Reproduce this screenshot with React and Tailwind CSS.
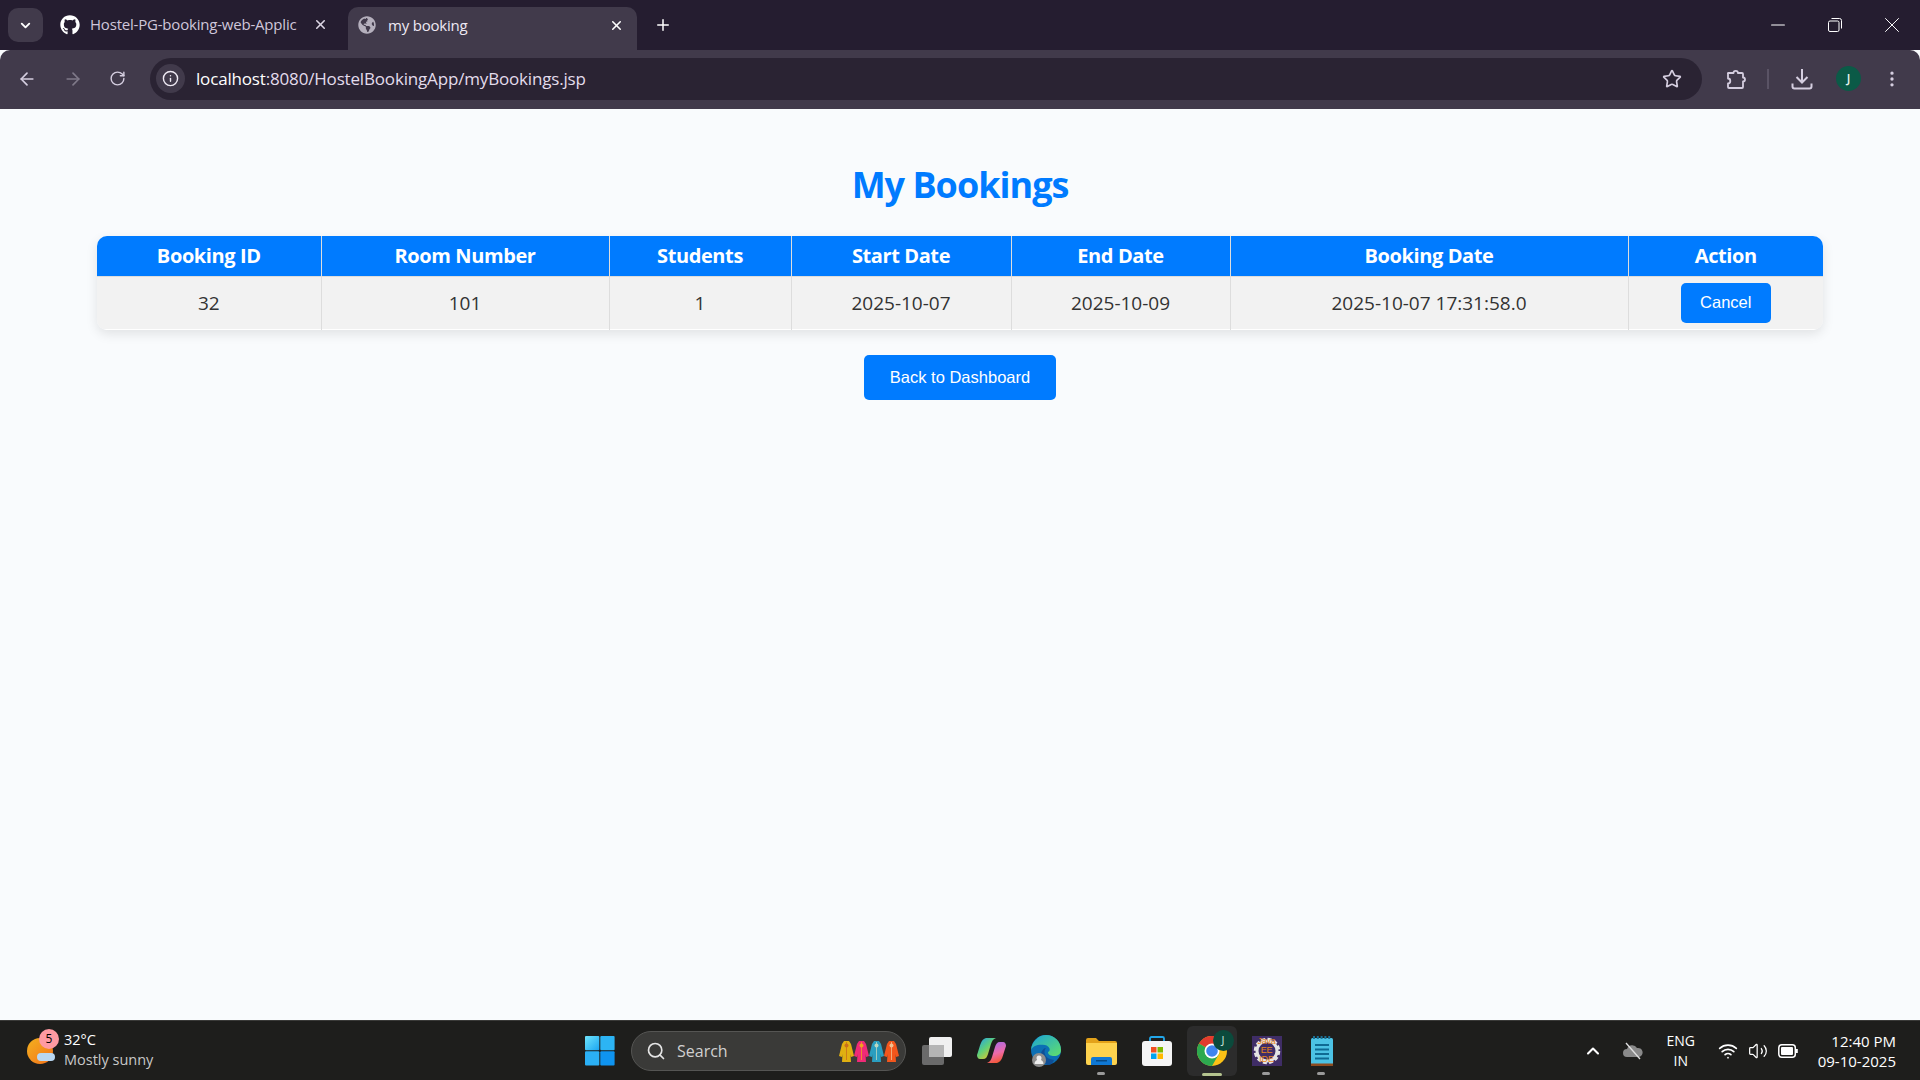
import {
  ArrowLeft,
  ArrowRight,
  ChevronDown,
  ChevronUp,
  EllipsisVertical,
  Info,
  Minus,
  Plus,
  RotateCw,
  Search,
  Star,
  Volume2,
  Wifi,
  X,
} from 'lucide-react'
import { FaGithub, FaGlobeAmericas } from 'react-icons/fa'

const columns = [
  { label: 'Booking ID', value: '32', width: 'w-[224px]' },
  { label: 'Room Number', value: '101', width: 'w-[288px]' },
  { label: 'Students', value: '1', width: 'w-[182px]' },
  { label: 'Start Date', value: '2025-10-07', width: 'w-[220px]' },
  { label: 'End Date', value: '2025-10-09', width: 'w-[219px]' },
  { label: 'Booking Date', value: '2025-10-07 17:31:58.0', width: 'w-[398px]' },
]

const segoe = "font-['Open_Sans',sans-serif]"

function WindowControls() {
  return (
    <div className="ml-auto flex items-center text-white">
      <div className="flex w-[57px] justify-center">
        <Minus size={22} strokeWidth={1.1} />
      </div>
      <div className="flex w-[57px] justify-center">
        <svg width="14" height="14" viewBox="0 0 14 14" fill="none" stroke="white" strokeWidth="1">
          <rect x="0.5" y="3" width="10.5" height="10.5" rx="1.5" />
          <path d="M3.5 .5h8a2 2 0 0 1 2 2v8" />
        </svg>
      </div>
      <div className="flex w-[57px] justify-center">
        <X size={26} strokeWidth={0.9} />
      </div>
    </div>
  )
}

function TabStrip() {
  return (
    <div className={`flex h-[50px] shrink-0 bg-[#251d30] ${segoe}`}>
      <div className="ml-2 mt-2 flex h-[34px] w-[35px] items-center justify-center rounded-[10px] bg-[#413a4b] text-white">
        <ChevronDown size={15} strokeWidth={3} />
      </div>
      <div className="ml-[17px] flex h-[50px] w-[288px] items-center pb-[1px]">
        <FaGithub size={20} className="text-white" />
        <span className="ml-[10px] w-[208px] overflow-hidden whitespace-nowrap text-[15px] tracking-[-0.2px] text-[#cfc6da]">
          Hostel-PG-booking-web-Applic
        </span>
        <X size={15} strokeWidth={2.5} className="ml-[15px] text-[#dcd6e4]" />
      </div>
      <div className="mt-[7px] flex h-[43px] w-[289px] items-center rounded-t-[10px] bg-[#413a4b] pb-[7px] pl-[10px]">
        <FaGlobeAmericas size={18} className="text-[#b5b0bd]" />
        <span className="ml-3 w-[221px] text-[15px] tracking-[-0.2px] text-[#eee9f3]">my booking</span>
        <X size={15} strokeWidth={2.5} className="text-white" />
      </div>
      <div className="ml-[17px] flex h-[50px] items-center">
        <Plus size={18} strokeWidth={2} className="text-white" />
      </div>
      <WindowControls />
    </div>
  )
}

function PuzzleIcon() {
  return (
    <svg width="22" height="22" viewBox="0 0 22 22" fill="none" stroke="#d5cee0" strokeWidth="1.8" strokeLinejoin="round">
      <path d="M3 5h5.500a2.200 2.200 0 0 1 4.400 0H17a1 1 0 0 1 1 1v3.500a2 2 0 0 1 0 4V19a1 1 0 0 1-1 1H4a1 1 0 0 1-1-1v-3.500c1.500 0 2.300-1 2.300-2.500S4.500 10.500 3 10.500V6a1 1 0 0 1 0-1z" />
    </svg>
  )
}

function DownloadIcon() {
  return (
    <svg width="22" height="22" viewBox="0 0 22 22" fill="none" stroke="#d5cee0" strokeWidth="2">
      <path d="M11 1v13M5.500 9l5.500 5.500L16.500 9" />
      <path d="M1.500 15.500v3a2 2 0 0 0 2 2h15a2 2 0 0 0 2-2v-3" />
    </svg>
  )
}

function Toolbar() {
  return (
    <div className="flex h-[59px] shrink-0 items-center rounded-t-[10px] bg-[#413a4b] pb-[2px] text-[#d5cee0]">
      <div className="flex w-[50px] justify-center pl-[4px]">
        <ArrowLeft size={20} />
      </div>
      <div className="flex w-[45px] justify-center">
        <ArrowRight size={20} className="text-[#7f7989]" />
      </div>
      <div className="flex w-[45px] justify-center">
        <RotateCw size={17} />
      </div>
      <div className="ml-[10px] flex h-[42px] w-[1552px] items-center rounded-full bg-[#2a2333]">
        <div className="ml-[6px] flex h-[29px] w-[29px] items-center justify-center rounded-full bg-[#413a4b]">
          <Info size={17} className="text-[#efeaf4]" />
        </div>
        <span className={`ml-[11px] text-[17px] tracking-[-0.17px] text-[#e3dcec] ${segoe}`}>
          <span className="text-white">localhost</span>:8080/HostelBookingApp/myBookings.jsp
        </span>
        <Star size={20} strokeWidth={2} className="ml-auto mr-5 text-[#d5cee0]" />
      </div>
      <div className="ml-[23px] flex w-[22px] justify-center">
        <PuzzleIcon />
      </div>
      <div className="ml-[20px] h-5 w-[2px] bg-[#5a5365]" />
      <div className="ml-[22px] flex w-[22px] justify-center">
        <DownloadIcon />
      </div>
      <div className={`ml-[23px] flex h-[25px] w-[25px] items-center justify-center rounded-full bg-[#0b5a47] text-[12px] font-semibold text-[#e6f3ee] ${segoe}`}>
        J
      </div>
      <div className="ml-[21px] flex w-[20px] justify-center">
        <EllipsisVertical size={20} />
      </div>
    </div>
  )
}

function BookingsTable() {
  return (
    <div className="ml-[97px] w-[1726px] overflow-hidden rounded-[10px] shadow-[0_4px_12px_rgba(0,0,0,0.1)]">
      <table className={`w-full table-fixed border-collapse ${segoe}`}>
        <thead>
          <tr className="h-[40px] bg-[#007bff] text-white">
            {columns.map((col) => (
              <th key={col.label} className={`${col.width} border-r border-[#dddddd] pt-[1px] text-[20px] font-bold tracking-[-0.4px]`}>
                {col.label}
              </th>
            ))}
            <th className="pt-[1px] text-[20px] font-bold tracking-[-0.4px]">Action</th>
          </tr>
        </thead>
        <tbody>
          <tr className="h-[53px] border-t border-b border-t-[#dddddd] border-b-white bg-[#f2f2f2] text-[#333333]">
            {columns.map((col) => (
              <td key={col.label} className="border-r border-[#dddddd] pt-[2px] text-center text-[19px]">
                {col.value}
              </td>
            ))}
            <td className="text-center">
              <button className="h-[40px] w-[90px] rounded-[5px] bg-[#007bff] font-['Liberation_Sans',sans-serif] text-[16.5px] text-white">
                Cancel
              </button>
            </td>
          </tr>
        </tbody>
      </table>
    </div>
  )
}

function WindowsLogo() {
  return (
    <svg width="30" height="30" viewBox="0 0 30 30">
      <defs>
        <linearGradient id="winA" x1="0" y1="0" x2="1" y2="1">
          <stop offset="0" stopColor="#6fe4fb" />
          <stop offset="1" stopColor="#1aa5f2" />
        </linearGradient>
      </defs>
      <rect x="0" y="0" width="14.3" height="14.3" rx="1" fill="url(#winA)" />
      <rect x="15.3" y="0" width="14.3" height="14.3" rx="1" fill="#2cb4f4" />
      <rect x="0" y="15.3" width="14.3" height="14.3" rx="1" fill="#2bb0f5" />
      <rect x="15.3" y="15.3" width="14.3" height="14.3" rx="1" fill="#0f94f0" />
    </svg>
  )
}

function Robe({ color, trim }) {
  return (
    <svg width="15" height="22" viewBox="0 0 15 22">
      <path d="M5 1h5l2 3 3 12-3 1-.5-3 .5 8H3l.5-8-.5 3-3-1L3 4z" fill={color} />
      <path d="M7.5 2v18" stroke={trim} strokeWidth="0.8" />
      <circle cx="7.5" cy="5.5" r="2" fill={trim} />
    </svg>
  )
}

function TaskViewIcon() {
  return (
    <svg width="30" height="28" viewBox="0 0 30 28">
      <rect x="0" y="8" width="22" height="20" rx="2" fill="#6a6a6a" />
      <rect x="7" y="0" width="23" height="20" rx="2" fill="#f0f0f0" />
      <rect x="7" y="8" width="15" height="12" fill="#b5b5b5" />
    </svg>
  )
}

function CopilotIcon() {
  return (
    <svg width="29" height="25" viewBox="0 0 29 25">
      <defs>
        <linearGradient id="copL" x1="0" y1="0" x2="0.8" y2="1">
          <stop offset="0" stopColor="#1e9ff2" />
          <stop offset="0.5" stopColor="#5fd07a" />
          <stop offset="1" stopColor="#f7c51e" />
        </linearGradient>
        <linearGradient id="copR" x1="0.3" y1="0" x2="0.6" y2="1">
          <stop offset="0" stopColor="#a86be8" />
          <stop offset="0.55" stopColor="#ee6aa8" />
          <stop offset="1" stopColor="#f4562e" />
        </linearGradient>
      </defs>
      <path d="M9 0h10c-3 1-4 3-5 6l-3 10c-1 3-2 5-5 5H3c-2 0-3-2-3-4l1-3C3 8 4 1 9 0z" fill="url(#copL)" />
      <path d="M20 25H10c3-1 4-3 5-6l3-10c1-3 2-5 5-5h3c2 0 3 2 3 4l-1 3c-2 6-3 13-8 14z" fill="url(#copR)" />
    </svg>
  )
}

function EdgeIcon() {
  return (
    <svg width="32" height="32" viewBox="0 0 32 32">
      <defs>
        <linearGradient id="edgeTop" x1="0" y1="0" x2="1" y2="1">
          <stop offset="0" stopColor="#1aa3d8" />
          <stop offset="1" stopColor="#62e06a" />
        </linearGradient>
      </defs>
      <circle cx="15" cy="15" r="15" fill="#0c6fb4" />
      <path d="M0 15C1 6 8 0 15 0c9 0 15 7 15 15 0 4-3 6-7 6-3 0-6-1-6-4 3-1 2-6-3-7C8 9 2 10 0 15z" fill="url(#edgeTop)" />
      <path d="M17 30c-5-1-9-6-7-12 1-3 3-5 5-5-3 3-2 11 8 12-1 3-3 5-6 5z" fill="#0f4f96" />
      <circle cx="8" cy="25" r="7" fill="#8d8d8d" />
      <circle cx="8" cy="23" r="2.5" fill="#eeeeee" />
      <path d="M3.5 29c0-6 9-6 9 0z" fill="#eeeeee" />
    </svg>
  )
}

function FolderIcon() {
  return (
    <svg width="31" height="28" viewBox="0 0 31 28">
      <path d="M0 3a2 2 0 0 1 2-2h8l3 3h16a2 2 0 0 1 2 2v6H0z" fill="#e3a21a" />
      <path d="M0 6h31v20a2 2 0 0 1-2 2H2a2 2 0 0 1-2-2z" fill="#fdd24e" />
      <path d="M5 28v-6a2 2 0 0 1 2-2h17a2 2 0 0 1 2 2v6z" fill="#0f78d4" />
      <rect x="10" y="23" width="11" height="1.5" fill="#064a87" />
    </svg>
  )
}

function StoreIcon() {
  return (
    <svg width="30" height="30" viewBox="0 0 30 30">
      <path d="M8 6V2.500A1.500 1.500 0 0 1 9.500 1h11A1.500 1.500 0 0 1 22 2.500V6" fill="none" stroke="#22a7ea" strokeWidth="1.8" />
      <rect x="0" y="5" width="30" height="25" rx="3" fill="#f5f5f5" />
      <rect x="9" y="11" width="5.500" height="5.500" fill="#f25022" />
      <rect x="15.500" y="11" width="5.500" height="5.500" fill="#7fba00" />
      <rect x="9" y="17.500" width="5.500" height="5.500" fill="#00a4ef" />
      <rect x="15.500" y="17.500" width="5.500" height="5.500" fill="#ffb900" />
    </svg>
  )
}

function ChromeIcon() {
  return (
    <div className="relative flex h-[50px] w-[50px] items-center justify-center rounded-[6px] bg-[#2c2c2c]">
      <svg width="30" height="30" viewBox="0 0 30 30">
        <circle cx="15" cy="15" r="15" fill="#fbc116" />
        <path d="M15 15 2 7.500A15 15 0 0 1 28 7.500z" fill="#e33b2e" />
        <path d="M2 7.500A15 15 0 0 0 15 30l7.500-13-7.500-2z" fill="#2da94f" />
        <circle cx="15" cy="15" r="7.500" fill="#ffffff" />
        <circle cx="15" cy="15" r="5.800" fill="#3f85ee" />
      </svg>
      <div className={`absolute right-[3px] top-[4px] flex h-[21px] w-[21px] items-center justify-center rounded-full bg-[#0b4a3c] text-[11px] text-[#cfe5dc] ${segoe}`}>
        J
      </div>
    </div>
  )
}

function JavaIdeIcon() {
  return (
    <div className="relative flex h-[30px] w-[30px] items-center justify-center overflow-hidden bg-[#3f2d66]">
      <svg width="30" height="30" viewBox="0 0 30 30" className="absolute">
        <circle cx="15" cy="15" r="10" fill="none" stroke="#e4e4e4" strokeWidth="3" />
        <circle cx="15" cy="15" r="12" fill="none" stroke="#e4e4e4" strokeWidth="2.500" strokeDasharray="4 2.300" />
      </svg>
      <span className="relative text-center font-['Liberation_Sans',sans-serif] text-[9px] leading-[9px] tracking-[-0.2px] text-[#e8861c]">
        Java EE
        <br />
        IDE
      </span>
    </div>
  )
}

function NotepadIcon() {
  return (
    <svg width="22" height="30" viewBox="0 0 22 30">
      <rect x="0" y="2" width="22" height="28" rx="1.500" fill="#4cc2e4" />
      <rect x="0" y="27.500" width="22" height="2.500" fill="#8c4b20" />
      <path d="M2 1.500h18" stroke="#1b6f94" strokeWidth="3" strokeDasharray="2 1.800" />
      <path d="M4 9h14M4 13.500h14M4 18h14M4 22.500h14" stroke="#0f6a93" strokeWidth="1.800" />
    </svg>
  )
}

function TaskSlot({ children, dot }) {
  return (
    <div className="relative flex h-[60px] w-[55px] shrink-0 items-center justify-center">
      {children}
      {dot && <div className="absolute bottom-[6px] left-[23px] h-[3px] w-2 rounded-full bg-[#9a9a9a]" />}
    </div>
  )
}

function Taskbar() {
  return (
    <div className={`flex h-[60px] shrink-0 items-center border-t border-[#3a3a38] bg-[#1e1e1c] text-white ${segoe}`}>
      {/* weather */}
      <div className="flex w-[585px] shrink-0 items-center pl-[27px]">
        <div className="relative h-[26px] w-[26px] rounded-full bg-gradient-to-br from-[#f2b11f] to-[#f2701a]">
          <div className="absolute -right-[6px] -top-[9px] flex h-5 w-5 items-center justify-center rounded-full bg-[#ff9aa2] text-[12px] text-black">
            5
          </div>
          <div className="absolute bottom-[3px] left-[10px] h-2 w-[18px] rounded-full bg-[#b9d7f2]" />
        </div>
        <div className="ml-[11px] pb-[2px] text-[14.5px] leading-[20px]">
          <div>32°C</div>
          <div className="text-[#c8c8c8]">Mostly sunny</div>
        </div>
      </div>
      <WindowsLogo />
      <div className="ml-[16px] flex h-10 w-[275px] shrink-0 items-center rounded-full border border-[#555553] bg-[#3a3a38] pl-[14px]">
        <Search size={20} className="text-[#e5e5e5]" />
        <span className="ml-[11px] text-[16px] text-[#d0d0d0]">Search</span>
        <div className="ml-auto mr-[6px] flex">
          <Robe color="#e0b011" trim="#c9701c" />
          <Robe color="#ef2a77" trim="#f0a020" />
          <Robe color="#2a9ec0" trim="#bcd8c0" />
          <Robe color="#f2561c" trim="#f0c090" />
        </div>
      </div>
      <div className="ml-[3px] flex">
        <TaskSlot><TaskViewIcon /></TaskSlot>
        <TaskSlot><CopilotIcon /></TaskSlot>
        <TaskSlot><EdgeIcon /></TaskSlot>
        <TaskSlot dot><FolderIcon /></TaskSlot>
        <TaskSlot><StoreIcon /></TaskSlot>
        <div className="relative flex h-[60px] w-[55px] shrink-0 items-center justify-center">
          <ChromeIcon />
          <div className="absolute bottom-[5px] left-[18px] h-[3px] w-5 rounded-full bg-[#b5c48f]" />
        </div>
        <TaskSlot dot><JavaIdeIcon /></TaskSlot>
        <TaskSlot dot><NotepadIcon /></TaskSlot>
      </div>
      {/* tray */}
      <div className="ml-auto flex items-center">
        <ChevronUp size={20} strokeWidth={2.5} />
        <svg width="20" height="18" viewBox="0 0 20 18" className="ml-[20px]">
          <path d="M4 15a4 4 0 0 1 0-8 5.500 5.500 0 0 1 10-1 4.500 4.500 0 0 1 2 9z" fill="#8a8a8a" />
          <path d="M3 1l14 16" stroke="#e0e0e0" strokeWidth="1.300" />
        </svg>
        <div className="ml-[18px] w-[40px] text-center text-[14px] leading-[20px]">
          <div>ENG</div>
          <div>IN</div>
        </div>
        <Wifi size={20} className="ml-[17px]" />
        <Volume2 size={20} strokeWidth={1.500} className="ml-[10px]" />
        <svg width="20" height="14" viewBox="0 0 20 14" className="ml-[10px]">
          <rect x="0.800" y="0.800" width="16.500" height="12.400" rx="3" fill="none" stroke="white" strokeWidth="1.500" />
          <rect x="3" y="3" width="12" height="8" rx="1" fill="white" />
          <rect x="18" y="5" width="1.800" height="4" fill="white" />
        </svg>
        <div className="ml-[20px] mr-6 text-right text-[15px] leading-[20px]">
          <div>12:40 PM</div>
          <div>09-10-2025</div>
        </div>
      </div>
    </div>
  )
}

export default function App() {
  return (
    <div className="flex h-screen w-full flex-col overflow-hidden bg-[#f9fbfd]">
      <TabStrip />
      <Toolbar />
      <main className="flex-1">
        <h1 className={`mt-[53px] text-center text-[36px] font-bold leading-[45px] tracking-[-1px] text-[#007bff] ${segoe}`}>
          My Bookings
        </h1>
        <div className="mt-[29px]">
          <BookingsTable />
        </div>
        <div className="mt-[25px] flex justify-center">
          <button className="h-[45px] w-[192px] rounded-[5px] bg-[#007bff] font-['Liberation_Sans',sans-serif] text-[16.5px] text-white">
            Back to Dashboard
          </button>
        </div>
      </main>
      <Taskbar />
    </div>
  )
}
